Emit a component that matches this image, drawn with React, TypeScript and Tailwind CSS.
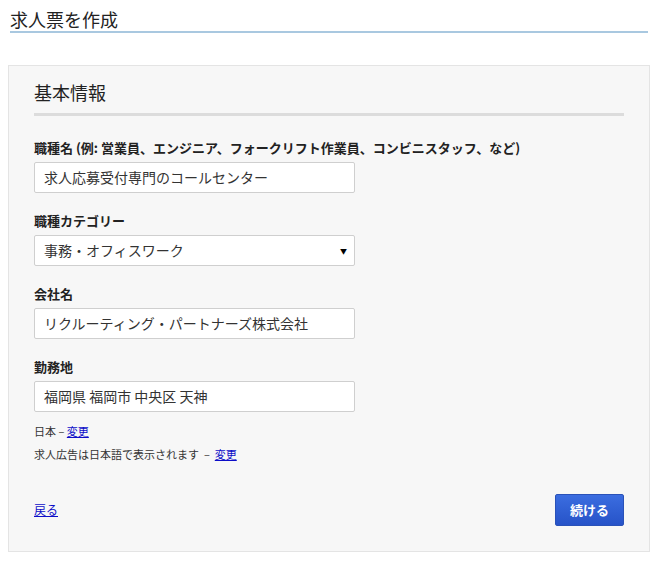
import React from "react";

const font = { fontFamily: '"Noto Sans CJK JP", "Noto Sans", sans-serif' };

function Field({ label, value, select }: { label: string; value: string; select?: boolean }) {
  return (
    <div className="mt-[19px]">
      <div className="h-[18px] leading-[18px] text-[13px] font-bold text-[#222] mb-[5px]">{label}</div>
      <div className="relative w-[321px] h-[31px] bg-white border border-[#cfcfcf] rounded-[2px] pl-[9px] flex items-center text-[14px] text-[#333]">
        {value}
        {select && (
          <span className="absolute right-[7px] top-[11px] text-[7px] leading-[8px] text-black">▼</span>
        )}
      </div>
    </div>
  );
}

export default function App() {
  return (
    <div className="w-[660px] h-[562px] bg-white" style={font}>
      <div className="pt-[7px] ml-[10px] w-[638px] border-b-2 border-[#a9c8e0]">
        <div className="h-[24px] leading-[24px] text-[18px] text-[#222]">求人票を作成</div>
      </div>
      <div className="ml-[8px] mt-[32px] w-[642px] bg-[#f7f7f7] border border-[#e4e4e4] px-[25px] pt-[14px] pb-[25px]">
        <div className="h-[24px] leading-[24px] text-[18px] text-[#222]">基本情報</div>
        <div className="mt-[9px] h-[3px] bg-[#dcdcdc]" />
        <div className="pt-[4px]">
          <Field label="職種名 (例: 営業員、エンジニア、フォークリフト作業員、コンビニスタッフ、など)" value="求人応募受付専門のコールセンター" />
          <Field label="職種カテゴリー" value="事務・オフィスワーク" select />
          <Field label="会社名" value="リクルーティング・パートナーズ株式会社" />
          <Field label="勤務地" value="福岡県 福岡市 中央区 天神" />
        </div>
        <div className="mt-[10px] h-[18px] leading-[18px] text-[11px] text-[#333]">
          日本 – <a className="text-[#0d0dc8] underline" href="#">変更</a>
        </div>
        <div className="mt-[5px] h-[18px] leading-[18px] text-[11px] text-[#333]">
          求人広告は日本語で表示されます&nbsp; –&nbsp; <a className="text-[#0d0dc8] underline" href="#">変更</a>
        </div>
        <div className="mt-[31px] flex items-center justify-between">
          <a className="text-[12px] text-[#0d0dc8] underline" href="#">戻る</a>
          <button className="w-[69px] h-[32px] rounded-[2px] bg-gradient-to-b from-[#3b6de0] to-[#2753c8] border border-[#2a52b8] text-white text-[13px] font-bold">
            続ける
          </button>
        </div>
      </div>
    </div>
  );
}
